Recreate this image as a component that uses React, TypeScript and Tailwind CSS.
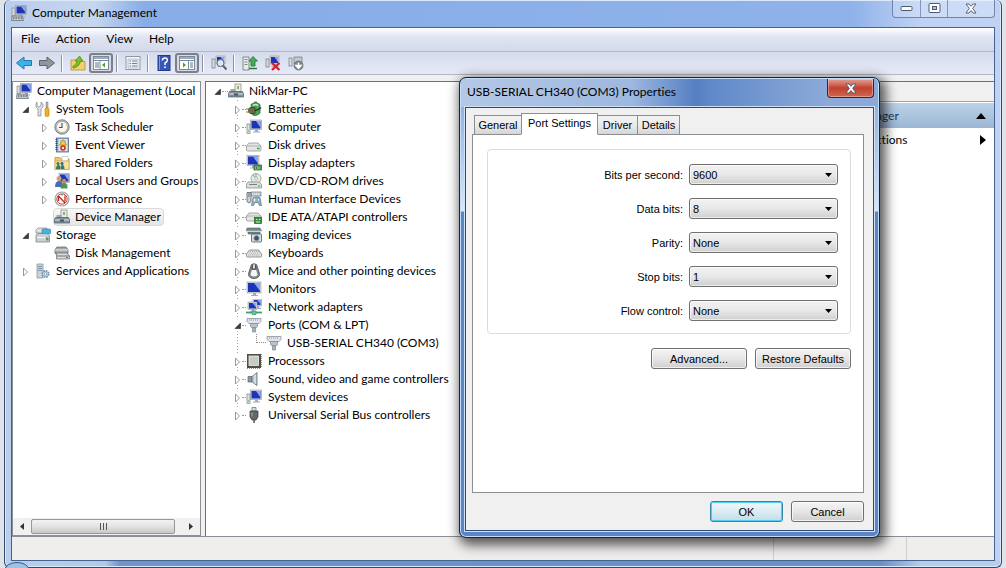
import type { ReactNode } from "react";
import clsx from "clsx";

function Icon({ children, size = 16 }: { children: ReactNode; size?: number }) {
  return (
    <svg width={size} height={size} viewBox="0 0 16 16" className="shrink-0" aria-hidden="true">
      {children}
    </svg>
  );
}

// blue screen shared by most of the computer-like icons
function Screen({ x = 4, y = 1, w = 11, h = 9 }: { x?: number; y?: number; w?: number; h?: number }) {
  return (
    <g>
      <rect x={x} y={y} width={w} height={h} fill="#d5dae1" stroke="#8d96a3" strokeWidth=".6" />
      <rect x={x + 1} y={y + 1} width={w - 2} height={h - 2} fill="#1c34b8" />
      <path d={`M${x + w / 2} ${y + 1}H${x + w - 1}V${y + h - 2}z`} fill="#8ea6ee" />
      <path d={`M${x + w / 2 - 1} ${y + h}h3v2h2v1h-7v-1h2z`} fill="#a4abb5" />
    </g>
  );
}

function Plug() {
  return (
    <g stroke="#7d8791" strokeWidth=".7">
      <path d="M1 1.5h14v2.8l-2 2.2H3L1 4.3z" fill="#dfe5ea" />
      <path d="M3 3h10" stroke="#8c97a1" strokeWidth="1.2" strokeDasharray="1 1" />
      <path d="M4.5 6.5h7v3.2l-1.5 1H6l-1.5-1z" fill="#b9c3cc" />
      <path d="M6.5 10.7h3V15h-3z" fill="#aab4bd" />
    </g>
  );
}

function Drive({ y = 6 }: { y?: number }) {
  return (
    <g>
      <path d={`M3 ${y}h9l3 3v4q0 1-1 1H1.500q-1 0-1-1V${y + 3}z`} fill="#e3e5e4" stroke="#858b89" strokeWidth=".7" />
      <path d={`M1 ${y + 3}h14`} stroke="#9ca3a0" strokeWidth=".8" />
      <path d={`M11 ${y + 5.5}h2.500`} stroke="#2ba53a" strokeWidth="1.5" />
    </g>
  );
}

const icons: Record<string, ReactNode> = {
  management: (
    <>
      <Screen x={4.5} y={0.5} w={11} h={9} />
      <rect x="1" y="3" width="3" height="8" fill="#d7d9dc" stroke="#777e87" strokeWidth=".6" />
      <path d="M1 11h10l1.500 4.500H.5z" fill="#c3c7cc" stroke="#5f6770" strokeWidth=".7" />
      <path d="M2 13h9" stroke="#40474f" strokeDasharray="1.500 1" />
    </>
  ),
  tools: (
    <>
      <path d="M2 1v3.500L4 6l2-1.500V1l2 2v3L6 8v7H3V8L1 6V3z" fill="#dde1e5" stroke="#7d858e" strokeWidth=".7" />
      <path d="M11 1h2v6h-2z" fill="#aeb5bd" stroke="#6f7780" strokeWidth=".5" />
      <rect x="10" y="7" width="4" height="8.500" rx="1.500" fill="#f1b01c" stroke="#b87c0a" strokeWidth=".6" />
    </>
  ),
  clock: (
    <>
      <circle cx="8" cy="8" r="7.200" fill="#b7bcc2" stroke="#646b73" strokeWidth=".8" />
      <circle cx="8" cy="8" r="5.500" fill="#fbf8ea" stroke="#989da3" strokeWidth=".6" />
      <path d="M8 4v4.500H5" fill="none" stroke="#36506f" strokeWidth="1.100" />
    </>
  ),
  events: (
    <>
      <rect x="2.500" y="1" width="12" height="14" fill="#9eb2cf" stroke="#4f688e" strokeWidth=".8" />
      <rect x="4.500" y="2" width="9" height="12" fill="#d9e3f1" />
      <path d="M6 4h6M6 6h6M6 8h6" stroke="#7892b7" strokeWidth=".8" />
      <path d="M2.500 2v12" stroke="#35496c" strokeWidth="2" strokeDasharray="1 1" />
      <path d="M9 2.500l3.500 5.500h-7z" fill="#f6d22c" stroke="#a48209" strokeWidth=".6" />
      <circle cx="9" cy="11" r="2.800" fill="#d93527" />
      <path d="M8 10l2 2M10 10l-2 2" stroke="#fff" strokeWidth=".9" />
    </>
  ),
  shared: (
    <>
      <path d="M1 2.500h5l1.500 1.500H15v10.500H1z" fill="#eecb6b" stroke="#b48b2a" strokeWidth=".7" />
      <path d="M8 1.500h6V6H8z" fill="#fff" stroke="#a1a9b3" strokeWidth=".5" />
      <path d="M1 6h14v8.500H1z" fill="#f9e29b" stroke="#c79f3e" strokeWidth=".6" />
      <circle cx="4" cy="8.500" r="1.500" fill="#37776d" />
      <circle cx="8" cy="8.500" r="1.500" fill="#315f9c" />
      <path d="M2 14q0-4 2.500-4T6 14zM6.500 14q0-4 2-4T10.500 14z" fill="#347d62" />
    </>
  ),
  users: (
    <>
      <Screen x={5} y={0.5} w={10.5} h={9} />
      <circle cx="5" cy="5.500" r="2.500" fill="#d3a276" />
      <path d="M1 14q0-6 4-6t4 6z" fill="#496db5" />
      <circle cx="10" cy="8" r="2.200" fill="#c68b59" />
      <path d="M6.500 15.500q0-5.500 3.500-5.500t3.500 5.500z" fill="#4b9650" />
    </>
  ),
  performance: (
    <>
      <circle cx="8" cy="8" r="7" fill="#fff" stroke="#9ba0a5" strokeWidth="1.200" />
      <circle cx="8" cy="8" r="5.200" fill="none" stroke="#c6413b" strokeWidth="1" />
      <path d="M4.500 5v5M4.500 5l6.500 7M11 4.500v6" stroke="#c02a25" strokeWidth="1.300" fill="none" />
      <path d="M8 3v1.500" stroke="#3f8e3b" strokeWidth="1.200" />
    </>
  ),
  device: (
    <>
      <rect x="7" y="1" width="6" height="8" fill="#ececdf" stroke="#80868a" strokeWidth=".7" />
      <path d="M9 3h2v3H9z" fill="#92b36d" />
      <path d="M2.500 6h5v3h-5z" fill="#9ba6ae" />
      <path d="M1.500 8.500h13l1 2V14H.5v-3.500z" fill="#83919c" stroke="#4e5d69" strokeWidth=".7" />
      <path d="M1 11h14" stroke="#d8e0e6" />
      <path d="M6 10.500h4v2H6z" fill="#46535e" />
    </>
  ),
  storage: (
    <>
      <path d="M1 3l2-2h9v5H1z" fill="#e2e4e6" stroke="#7a8086" strokeWidth=".7" />
      <rect x="7" y="2" width="8.500" height="5" rx="1" fill="#45b4e2" stroke="#2681ad" strokeWidth=".6" />
      <path d="M1 8l2-1.500h9L14.500 9v6H1z" fill="#cbd0d4" stroke="#717980" strokeWidth=".7" />
      <path d="M2 10.500h8" stroke="#f7f8f9" />
      <rect x="11" y="10.500" width="2.500" height="3" fill="#6a9566" />
    </>
  ),
  disks: (
    <>
      <path d="M3 2h9l2 2.500v4H1v-4z" fill="#a4a8ab" stroke="#54595d" strokeWidth=".7" />
      <path d="M1 5h13" stroke="#e9ebec" />
      <path d="M2.500 8h10l3 2.500V14h-13z" fill="#d9dbdc" stroke="#62676b" strokeWidth=".7" />
      <path d="M3 11h12" stroke="#6d7277" />
      <path d="M12 12.500h2" stroke="#27993b" strokeWidth="1.200" />
    </>
  ),
  services: (
    <>
      <path d="M2 1h6v14H2z" fill="#cbd3da" stroke="#7d8a96" strokeWidth=".7" />
      <path d="M3 3.500h4M3 5.500h4M3 7.500h4" stroke="#6e8295" strokeWidth=".8" />
      <circle cx="10.500" cy="11" r="3.200" fill="#c6d7e6" stroke="#6689a9" strokeWidth="1.700" strokeDasharray="1.500 1" />
      <circle cx="10.500" cy="11" r="1.200" fill="#fff" stroke="#6689a9" strokeWidth=".6" />
    </>
  ),
  battery: (
    <>
      <path d="M8 .5h3V2H8z" fill="#858c8a" />
      <path d="M5 3.500Q9.500 0 14 3.500V12q-4 4-8 1.500z" fill="#4aa655" stroke="#276530" strokeWidth=".8" />
      <path d="M7 4.500q2.500-2 5 0" stroke="#c6efc7" strokeWidth="1.500" fill="none" />
      <path d="M4 6.500h5v6H4L2.500 11V8z" fill="#6d6a4c" stroke="#26292a" strokeWidth=".6" />
      <path d="M0 8h3M0 11h3" stroke="#8a7a3c" strokeWidth="1.200" />
      <path d="M9 9.500q3 0 6-3" fill="none" stroke="#2c312d" strokeWidth="1.500" />
    </>
  ),
  computer: (
    <>
      <Screen x={4.5} y={1} w={11} h={9.5} />
      <rect x="1" y="5" width="3" height="9.500" fill="#dfe1e3" stroke="#7b838a" strokeWidth=".7" />
      <path d="M2 12h1" stroke="#3da443" />
    </>
  ),
  drive: <Drive y={6} />,
  display: (
    <>
      <Screen x={1} y={0.5} w={12} h={10} />
      <rect x="8" y="10" width="7.500" height="5" fill="#489a4d" stroke="#255b2b" strokeWidth=".7" />
      <path d="M9.500 12h2v2h-2zM13 11.500v3" fill="#1c2f21" stroke="#d6dcc2" strokeWidth=".6" />
    </>
  ),
  dvd: (
    <>
      <circle cx="10" cy="5.500" r="5" fill="#e6ece5" stroke="#8d9994" strokeWidth=".8" />
      <circle cx="10" cy="5.500" r="1.500" fill="#fff" stroke="#8d9994" strokeWidth=".7" />
      <path d="M10 .8V4M7 1.500l1.500 2.500" stroke="#78b580" />
      <path d="M2 9h11l2.500 2v4H.5v-4z" fill="#dcdfde" stroke="#7b8280" strokeWidth=".7" />
      <path d="M3 11.500h8" stroke="#7b8280" />
      <path d="M12 13h2" stroke="#2ba53a" />
    </>
  ),
  hid: (
    <>
      <rect x="5" y="1" width="10" height="4" fill="#c4cbd1" stroke="#737d86" strokeWidth=".7" />
      <path d="M6 3h8" stroke="#fff" strokeDasharray="1 1" />
      <path d="M1 1.500h4v9q-2 3-4 0z" fill="#cbd1d6" stroke="#59636d" strokeWidth=".8" />
      <path d="M3 2v4" stroke="#4f5962" strokeWidth=".8" />
      <path d="M7 6.500q4-1.500 7 0l1.500 8h-2l-1.500-3h-3l-1.500 3h-2z" fill="#8fb0c4" stroke="#5c7688" strokeWidth=".7" />
      <path d="M8.500 7.500v3M7.500 9h2M12.500 8v1.500" stroke="#f0f7fb" />
    </>
  ),
  ide: (
    <>
      <Drive y={4} />
      <rect x="8.500" y="8.500" width="7" height="6" fill="#3b8f40" stroke="#235a29" strokeWidth=".7" />
      <path d="M10 10.500h1.500M13 10.500h1.500M10 13h4" stroke="#d9e6bd" />
    </>
  ),
  imaging: (
    <>
      <path d="M1 1h13l1.500 3H.5zM2 5h12v2H2z" fill="#6f8a88" stroke="#4e6266" strokeWidth=".6" />
      <path d="M1 4.200h14" stroke="#dfe6e6" />
      <rect x="5.500" y="7" width="10" height="8" rx="1" fill="#d9dee1" stroke="#525b62" strokeWidth=".8" />
      <circle cx="10.500" cy="11.200" r="2.600" fill="#35546d" stroke="#8ba0ae" strokeWidth=".8" />
    </>
  ),
  keyboard: (
    <>
      <path d="M3.500 5h9l3 4q1 3-1 3h-13q-2 0-1-3z" fill="#e4e5e6" stroke="#777b7e" strokeWidth=".8" />
      <path d="M4 6.500h9M3 8.200h10.500M2 10h12" stroke="#9b9fa2" strokeWidth=".8" strokeDasharray="1.200 .8" />
    </>
  ),
  mouse: (
    <>
      <path d="M5.500 1.500Q8 0 10.500 1.500l3 9Q14 15 8 15.500 2 15 2.500 10.500z" fill="#85898c" stroke="#555b60" strokeWidth=".9" />
      <path d="M6 2q2-1 4 0l.5 4.500q-2.500 1.500-5 0z" fill="#4c5155" />
      <path d="M8 1.500v4" stroke="#fff" strokeWidth="1.600" />
      <path d="M6 6.500q2 1.200 4 0l1.500 5.500Q8 15 4.500 12z" fill="#f5f6f6" />
    </>
  ),
  monitor: <Screen x={1} y={1} w={14} h={11} />,
  network: (
    <>
      <Screen x={7} y={0} w={8.5} h={7} />
      <Screen x={2} y={3} w={9} h={7.5} />
      <path d="M0 13.500h16" stroke="#36a475" strokeWidth="1.800" />
      <path d="M6 12h4v3.500H6z" fill="#69c893" stroke="#2c8958" strokeWidth=".6" />
    </>
  ),
  port: <Plug />,
  cpu: (
    <>
      <rect x="1" y="1" width="14" height="14" fill="#4e4e47" />
      <path d="M1 15.500h14M15.500 1v14" stroke="#a2915c" strokeDasharray="1 1" />
      <rect x="3" y="3" width="9.500" height="9.500" fill="#c8cac8" stroke="#eeefed" strokeWidth=".8" />
    </>
  ),
  sound: (
    <>
      <path d="M2 5.500h4V11H2z" fill="#8e979d" stroke="#566169" strokeWidth=".7" />
      <path d="M6 5.500L11 1.500v13L6 11z" fill="#bac4cb" stroke="#606d76" strokeWidth=".8" />
      <path d="M9 3.500v9" stroke="#eff5f8" />
    </>
  ),
  usb: (
    <>
      <path d="M6 .5h4V4H6z" fill="#d9dcde" stroke="#666b70" strokeWidth=".7" />
      <path d="M4 4h8v6l-2 3H6l-2-3z" fill="#62676b" stroke="#33383c" strokeWidth=".7" />
      <path d="M6 5.500v4" stroke="#a7acb0" />
      <path d="M8 13v3" stroke="#4e5357" strokeWidth="1.500" />
    </>
  ),
  back: <path d="M8 2L.5 8 8 14v-3.500h7.500v-5H8z" fill="#3fb1ea" stroke="#2875ad" strokeWidth="1" />,
  forward: <path d="M8 2l7.500 6L8 14v-3.500H.5v-5H8z" fill="#8f969c" stroke="#5c6369" strokeWidth="1" />,
  up: (
    <>
      <path d="M1 5h5l1 1.500h8V15H1z" fill="#f1d16c" stroke="#b59134" strokeWidth=".8" />
      <path d="M3 11q3 0 4-5H5l4.500-5L13 6h-2.500q-1 6-7.500 7z" fill="#79bd2d" stroke="#4b8613" strokeWidth=".7" />
    </>
  ),
  treePane: (
    <>
      <rect x=".5" y="1.500" width="15" height="13" fill="#fff" stroke="#788b9e" />
      <path d="M1 3h14" stroke="#9aacbd" strokeWidth="2" />
      <path d="M1 5.500h14M7 6v8" stroke="#788b9e" />
      <path d="M2 8h4M2 10h4M2 12h4" stroke="#617488" />
      <path d="M12 7.500v5L9 10z" fill="#46a527" />
    </>
  ),
  actionPane: (
    <>
      <rect x=".5" y="1.500" width="15" height="13" fill="#fff" stroke="#788b9e" />
      <path d="M1 3h14" stroke="#9aacbd" strokeWidth="2" />
      <path d="M1 5.500h14M9.500 6v8" stroke="#788b9e" />
      <path d="M11 8h3M11 10h3M11 12h3" stroke="#617488" />
      <path d="M4 7.500v5L7 10z" fill="#46a527" />
    </>
  ),
  properties: (
    <>
      <rect x="1" y="1.500" width="14" height="13" fill="#fcfcfc" stroke="#8c98a5" />
      <path d="M3 4h10v9H3z" fill="#eef2f4" stroke="#9daab7" strokeWidth=".7" />
      <path d="M4.500 6h1.500M7 6h5M4.500 8.500H6M7 8.500h5M4.500 11H6M7 11h5" stroke="#6e8396" />
    </>
  ),
  help: (
    <>
      <rect x="2" y=".5" width="12" height="15" fill="#3556ba" stroke="#223a86" />
      <path d="M3.500 1v14" stroke="#7e98e0" />
      <path d="M6.300 5.500Q6.500 3 9 3t2.300 2.300Q11.300 7 9 8v2" fill="none" stroke="#fff" strokeWidth="1.500" />
      <path d="M9 11.500V13" stroke="#fff" strokeWidth="1.700" />
    </>
  ),
  scan: (
    <>
      <rect x="1" y="4" width="3" height="9" fill="#d9dde1" stroke="#717b85" strokeWidth=".7" />
      <Screen x={5} y={1} w={9} h={8} />
      <circle cx="9.500" cy="8" r="3.500" fill="#d8e8f7" stroke="#66717b" />
      <path d="M12 10.500l3.500 4" stroke="#5c656d" strokeWidth="2" />
    </>
  ),
  update: (
    <>
      <path d="M1 2h6v13H1z" fill="#e9ecec" stroke="#68736f" strokeWidth=".8" />
      <path d="M2.500 4.500h3M2.500 7h3M2.500 9.500h3" stroke="#69996e" />
      <path d="M7 6l4-4.500L15.500 6H13v5H9V6z" fill="#45ac57" stroke="#226f30" strokeWidth=".8" />
      <path d="M7 13.500h8" stroke="#287c38" strokeWidth="1.500" />
    </>
  ),
  uninstall: (
    <>
      <rect x="1" y="4" width="3" height="8" fill="#d9dde1" stroke="#717b85" strokeWidth=".7" />
      <Screen x={5} y={1} w={9} h={8} />
      <path d="M7 8l7.500 7M14.500 8L7 15" stroke="#d3242b" strokeWidth="2.300" />
    </>
  ),
  disable: (
    <>
      <rect x="1" y="3" width="3" height="8" fill="#d9dde1" stroke="#717b85" strokeWidth=".7" />
      <path d="M6 2h8v7H6z" fill="#c5c9cd" stroke="#7b8187" strokeWidth=".8" />
      <circle cx="10.500" cy="10.500" r="4.500" fill="#84898e" stroke="#555a5f" strokeWidth=".7" />
      <path d="M10.500 7.500V11M7.800 10.500l2.700 3 2.700-3z" fill="#fff" stroke="#fff" strokeWidth="1.300" />
    </>
  ),
};

function Twisty({ open }: { open?: boolean }) {
  return (
    <svg width="8" height="12" viewBox="0 0 8 12" className="shrink-0" aria-hidden="true">
      {open ? (
        <path d="M6.500 4v5.500H1z" fill="#3c3c3c" stroke="#222" strokeWidth=".6" />
      ) : (
        <path d="M1.500 3v8L5.500 7z" fill="#fff" stroke="#999" />
      )}
    </svg>
  );
}

type Node = { label: string; icon: string; level: number; state?: "open" | "closed"; selected?: boolean };

const consoleTree: Node[] = [
  { label: "System Tools", icon: "tools", level: 0, state: "open" },
  { label: "Task Scheduler", icon: "clock", level: 1, state: "closed" },
  { label: "Event Viewer", icon: "events", level: 1, state: "closed" },
  { label: "Shared Folders", icon: "shared", level: 1, state: "closed" },
  { label: "Local Users and Groups", icon: "users", level: 1, state: "closed" },
  { label: "Performance", icon: "performance", level: 1, state: "closed" },
  { label: "Device Manager", icon: "device", level: 1, selected: true },
  { label: "Storage", icon: "storage", level: 0, state: "open" },
  { label: "Disk Management", icon: "disks", level: 1 },
  { label: "Services and Applications", icon: "services", level: 0, state: "closed" },
];

const devices = [
  { label: "Batteries", icon: "battery" },
  { label: "Computer", icon: "computer" },
  { label: "Disk drives", icon: "drive" },
  { label: "Display adapters", icon: "display" },
  { label: "DVD/CD-ROM drives", icon: "dvd" },
  { label: "Human Interface Devices", icon: "hid" },
  { label: "IDE ATA/ATAPI controllers", icon: "ide" },
  { label: "Imaging devices", icon: "imaging" },
  { label: "Keyboards", icon: "keyboard" },
  { label: "Mice and other pointing devices", icon: "mouse" },
  { label: "Monitors", icon: "monitor" },
  { label: "Network adapters", icon: "network" },
  { label: "Ports (COM & LPT)", icon: "port", child: "USB-SERIAL CH340 (COM3)" },
  { label: "Processors", icon: "cpu" },
  { label: "Sound, video and game controllers", icon: "sound" },
  { label: "System devices", icon: "computer" },
  { label: "Universal Serial Bus controllers", icon: "usb" },
];

const toolbar = [
  { name: "Back", icon: "back" },
  { name: "Forward", icon: "forward" },
  null,
  { name: "Up one level", icon: "up" },
  { name: "Show/Hide Console Tree", icon: "treePane", pressed: true },
  null,
  { name: "Properties", icon: "properties" },
  null,
  { name: "Help", icon: "help" },
  { name: "Show/Hide Action Pane", icon: "actionPane", pressed: true },
  null,
  { name: "Scan for hardware changes", icon: "scan" },
  null,
  { name: "Update Driver", icon: "update" },
  { name: "Uninstall", icon: "uninstall" },
  { name: "Disable", icon: "disable" },
];

const settings = [
  { id: "bps", label: "Bits per second:", options: ["9600", "19200", "38400", "57600", "115200"] },
  { id: "data", label: "Data bits:", options: ["8", "7", "6", "5"] },
  { id: "parity", label: "Parity:", options: ["None", "Even", "Odd", "Mark", "Space"] },
  { id: "stop", label: "Stop bits:", options: ["1", "1.5", "2"] },
  { id: "flow", label: "Flow control:", options: ["None", "Xon / Xoff", "Hardware"] },
];

function TitleBar() {
  return (
    <header className="flex h-[27px] shrink-0 items-start justify-between">
      <h1 className="flex h-[26px] items-center gap-[5px]">
        <Icon>{icons.management}</Icon>
        <span>Computer Management</span>
      </h1>
      <div className="flex h-[18px] w-[103px] rounded-b border border-t-0 border-[#6f86ad] bg-white/20">
        <button aria-label="Minimize" className="flex w-7 items-center justify-center border-r border-[#8297bb]">
          <svg width="13" height="7">
            <rect x="1" y="1.500" width="11" height="4" rx="1" fill="#fff" stroke="#4d5a6d" />
          </svg>
        </button>
        <button aria-label="Maximize" className="flex w-[27px] items-center justify-center border-r border-[#8297bb]">
          <svg width="13" height="11">
            <rect x="1" y=".5" width="11" height="9" rx="1" fill="#fff" stroke="#4d5a6d" />
            <rect x="4.500" y="3.500" width="4" height="3" fill="#a9c1ea" stroke="#4d5a6d" />
          </svg>
        </button>
        <button aria-label="Close" className="flex flex-1 items-center justify-center">
          <CloseMark />
        </button>
      </div>
    </header>
  );
}

function CloseMark() {
  return (
    <svg width="12" height="11" viewBox="0 0 12 11" aria-hidden="true">
      <path
        d="M1 1h3l2 2.300L8 1h3L7.700 5.300 11 10H8L6 7.500 4 10H1l3.300-4.700z"
        fill="#fff"
        stroke="#4d5566"
        strokeWidth=".9"
      />
    </svg>
  );
}

function ConsoleTree() {
  return (
    <nav className="flex w-[189px] shrink-0 flex-col border border-[#8a8f98] bg-white">
      <ul className="min-h-0 flex-1 overflow-hidden whitespace-nowrap">
        <li className="flex h-[18px] items-center gap-[5px] pl-[3px]">
          <Icon>{icons.management}</Icon>
          <span>Computer Management (Local</span>
        </li>
        {consoleTree.map((node) => (
          <li
            key={node.label}
            className={clsx("flex h-[18px] items-center gap-1", node.level === 0 ? "pl-[9px]" : "pl-7")}
          >
            {node.state ? <Twisty open={node.state === "open"} /> : <span className="w-2" />}
            <a
              href="#"
              className={clsx(
                "flex h-[18px] items-center gap-1 rounded-sm border",
                node.selected ? "border-[#d9d9d9] bg-linear-to-b from-[#f8f8f8] to-[#e5e5e5]" : "border-transparent",
              )}
            >
              <Icon>{icons[node.icon]}</Icon>
              <span className="pr-0.5 pl-px">{node.label}</span>
            </a>
          </li>
        ))}
      </ul>
      <div className="flex h-[17px] items-center bg-[#f0f0f0]">
        <button aria-label="Scroll left" className="flex w-[18px] justify-center">
          <svg width="4" height="7">
            <path d="M4 0v7L0 3.500z" fill="#333" />
          </svg>
        </button>
        <div className="flex h-[15px] w-[144px] items-center justify-center gap-0.5 rounded-xs border border-[#979797] bg-linear-to-b from-[#f3f3f3] via-[#e2e2e2] via-50% to-[#c8c8c8]">
          <span className="h-[7px] w-px bg-[#555]" />
          <span className="h-[7px] w-px bg-[#555]" />
          <span className="h-[7px] w-px bg-[#555]" />
        </div>
        <button aria-label="Scroll right" className="ml-auto flex w-[18px] justify-center">
          <svg width="4" height="7">
            <path d="M0 0v7l4-3.500z" fill="#333" />
          </svg>
        </button>
      </div>
    </nav>
  );
}

function DeviceTree() {
  return (
    <section className="min-w-0 flex-1 border-t border-l border-[#6b6f76] bg-white whitespace-nowrap">
      <div className="flex h-[18px] items-center pl-2">
        <Twisty open />
        <span className="w-1.5 border-t border-dotted border-[#999]" />
        <Icon>{icons.device}</Icon>
        <span className="pl-[5px]">NikMar-PC</span>
      </div>
      <ul className="bg-[repeating-linear-gradient(to_bottom,#a3a3a3_0_1px,transparent_1px_3px)] bg-[length:1px_320px] bg-[position:31px_0] bg-no-repeat">
        {devices.map((device) => (
          <li key={device.label}>
            <div className="flex h-[18px] items-center pl-7">
              <span className="flex bg-white">
                <Twisty open={Boolean(device.child)} />
              </span>
              <span className="w-1 border-t border-dotted border-[#999]" />
              <Icon>{icons[device.icon]}</Icon>
              <span className="pl-1.5">{device.label}</span>
            </div>
            {device.child && (
              <div className="flex h-[18px] pl-[50px]">
                <span className="h-[9px] w-2.5 border-b border-l border-dotted border-[#888]" />
                <span className="flex items-center gap-[5px]">
                  <Icon>{icons.port}</Icon>
                  {device.child}
                </span>
              </div>
            )}
          </li>
        ))}
      </ul>
    </section>
  );
}

function ActionsPane() {
  return (
    <aside className="w-[190px] shrink-0 border-t border-l border-[#6b6f76] bg-white">
      <h2 className="h-[20px] border-b border-[#a0a5ad] bg-[#f0f0f0] pl-1.5">Actions</h2>
      <button className="mt-px flex h-[25px] w-full items-center justify-between bg-linear-to-b from-[#bdd2e8] to-[#9bb6d4] pr-2 pl-2 text-[#1e395b]">
        Device Manager
        <svg width="10" height="6">
          <path d="M0 6L5 0l5 6z" fill="#000" />
        </svg>
      </button>
      <button className="flex h-[23px] w-full items-center justify-between pr-2 pl-8">
        More Actions
        <svg width="6" height="10">
          <path d="M0 0l6 5-6 5z" fill="#000" />
        </svg>
      </button>
    </aside>
  );
}

function PushButton({ children, primary, wide }: { children: ReactNode; primary?: boolean; wide?: boolean }) {
  return (
    <button
      className={clsx(
        "h-[21px] rounded-[3px] border bg-linear-to-b",
        wide ? "w-24" : "w-[73px]",
        primary
          ? "border-[#2d8bb0] from-[#eef8fc] via-[#dcecf3] via-50% to-[#c3dbe6] inset-ring inset-ring-[#52cdf0]"
          : "border-[#707070] from-[#f4f4f4] via-[#e6e6e6] via-50% to-[#cfcfcf] inset-ring inset-ring-white/70",
      )}
    >
      {children}
    </button>
  );
}

const tabs = [
  { name: "General", width: "w-[48px]" },
  { name: "Port Settings", width: "w-[77px]", active: true },
  { name: "Driver", width: "w-[41px]" },
  { name: "Details", width: "w-[43px]" },
];

function PropertiesDialog() {
  return (
    <div
      role="dialog"
      aria-labelledby="dialog-title"
      className="absolute top-[77px] left-[459px] w-[421px] rounded-[7px] border border-[#15233c] bg-[#5b85c3] bg-linear-to-b from-[#7fa3d8] from-0% via-[#dbe6f5] via-[133px] to-[#5b85c3] to-[134px] px-[5px] pb-[6px] font-['Liberation_Sans',Arial,sans-serif] text-[11px] leading-[14px] shadow-[3px_4px_12px_3px_rgba(0,0,0,0.65)] inset-ring inset-ring-[#c4ddf8]"
    >
      <div className="mx-[-4px] mt-px flex h-7 items-start justify-between rounded-t-[5px] bg-[linear-gradient(to_right,#b4c8e6_0,#9db8e0_170px,#557fc2_235px,#6089c9_60%,#8caad8_88%)] pr-1 pl-1.5 font-[Lato,'Open_Sans',sans-serif]">
        <h2 id="dialog-title" className="text-[12px] leading-[26px]">
          USB-SERIAL CH340 (COM3) Properties
        </h2>
        <button
          aria-label="Close"
          className="flex h-[19px] w-[47px] items-center justify-center rounded-b border border-t-0 border-[#4d1c22] bg-linear-to-b from-[#e0a196] via-[#c0402d] via-50% to-[#d3664f] inset-ring inset-ring-white/35"
        >
          <CloseMark />
        </button>
      </div>
      <div className="border border-[#2c4a78] bg-[#f0f0f0] pt-1.5 pr-[9px] pb-2 pl-1.5 ring ring-[#cfe1f7]">
        <div role="tablist" className="relative flex h-5 items-end pl-0.5">
          {tabs.map((tab) => (
            <button
              key={tab.name}
              role="tab"
              aria-selected={Boolean(tab.active)}
              className={clsx(
                "shrink-0 border border-[#8c8e94]",
                tab.width,
                tab.active
                  ? "-mb-px h-[22px] -ml-px border-b-white bg-white pb-0.5"
                  : "-ml-px h-[19px] border-b-0 bg-linear-to-b from-[#f3f3f3] via-[#ebebeb] via-50% to-[#d5d5d5] first:ml-0",
              )}
            >
              {tab.name}
            </button>
          ))}
        </div>
        <div role="tabpanel" className="h-[359px] border border-[#8c8e94] bg-white pt-3.5 pr-3 pl-3.5">
          <div className="flex flex-col gap-[13px] rounded-[4px] border border-[#dcdcdc] pt-3.5 pr-3 pb-3">
            {settings.map((field) => (
              <div key={field.id} className="flex items-center justify-end gap-1.5">
                <label htmlFor={field.id}>{field.label}</label>
                <span className="relative">
                  <select
                    id={field.id}
                    className="block h-[21px] w-[149px] appearance-none rounded-[3px] border border-[#707070] bg-linear-to-b from-[#f2f2f2] via-[#e8e8e8] via-50% to-[#cfcfcf] pl-[3px] inset-ring inset-ring-white/60"
                  >
                    {field.options.map((option) => (
                      <option key={option}>{option}</option>
                    ))}
                  </select>
                  <svg width="7" height="4" className="pointer-events-none absolute top-[9px] right-1.5">
                    <path d="M0 0h7L3.500 4z" fill="#000" />
                  </svg>
                </span>
              </div>
            ))}
          </div>
          <div className="mt-3.5 flex justify-end gap-2">
            <PushButton wide>Advanced...</PushButton>
            <PushButton wide>Restore Defaults</PushButton>
          </div>
        </div>
        <div className="mt-2 flex justify-end gap-2">
          <PushButton primary>OK</PushButton>
          <PushButton>Cancel</PushButton>
        </div>
      </div>
    </div>
  );
}

export default function App() {
  return (
    <div className="relative flex h-screen min-h-[568px] overflow-hidden bg-[#dfe4ea] pr-1 pl-1 font-[Lato,'Open_Sans',sans-serif] text-[12px] leading-[18px] text-black [font-variant-ligatures:none]">
      <div className="flex min-w-0 flex-1 flex-col rounded-[6px] border border-t-0 border-[#34496b] bg-[linear-gradient(to_right,#b9cdec_0,#b4c9ea_100px,#6f93ca_115px,#6a90ca_88%,#b9cdec_92%),linear-gradient(to_right,#b9cdec_0,#c6d6ee_90px,#87ace6_140px,#8fb2ea_85%,#c0d2f4_92%)] bg-[length:100%_7px,100%_100%] bg-bottom bg-no-repeat px-1.5 pb-1.5 inset-ring inset-ring-[#dce9fa]">
        <TitleBar />
        <div className="flex min-h-0 flex-1 flex-col border border-[#44638f] bg-[#f0f0f0]">
          <div role="menubar" className="flex h-6 shrink-0 items-center border-b border-[#b3b8c8] bg-linear-to-b from-white via-[#dfe4f1] via-40% to-[#d4daeb] pb-0.5 pl-px">
            {["File", "Action", "View", "Help"].map((name) => (
              <button key={name} role="menuitem" className="px-2">
                {name}
              </button>
            ))}
          </div>
          <div role="toolbar" className="flex h-[23px] shrink-0 items-center border-b border-[#b3b8c8] bg-linear-to-b from-[#d6dbec] to-[#e6eaf7]">
            {toolbar.map((item, i) =>
              item ? (
                <button
                  key={item.name}
                  aria-label={item.name}
                  className={clsx(
                    "flex h-5 items-center justify-center",
                    item.pressed ? "w-6 rounded-[3px] border-2 border-[#7a7f8a] bg-[#d8dbe4]" : "w-[23px]",
                  )}
                >
                  <Icon>{icons[item.icon]}</Icon>
                </button>
              ) : (
                <span key={i} className="mx-[3px] h-[17px] w-0.5 border-r border-l border-r-white border-l-[#8e939f]" />
              ),
            )}
          </div>
          <main className="flex min-h-0 flex-1 gap-1 pt-[6px]">
            <ConsoleTree />
            <DeviceTree />
            <ActionsPane />
          </main>
          <footer className="flex h-6 shrink-0 justify-end border-t border-[#8a8f98] bg-[#f0eded]">
            <span className="w-[133px] border-l border-[#cfcccc]" />
            <span className="w-[88px] border-l border-[#cfcccc]" />
          </footer>
        </div>
      </div>
      {/* top of the start orb peeking over the window edge */}
      <svg width="26" height="6" className="absolute bottom-0 left-1" aria-hidden="true">
        <ellipse cx="13" cy="8" rx="12" ry="7.500" fill="#9cc3e6" stroke="#35577f" />
      </svg>
      <PropertiesDialog />
    </div>
  );
}
